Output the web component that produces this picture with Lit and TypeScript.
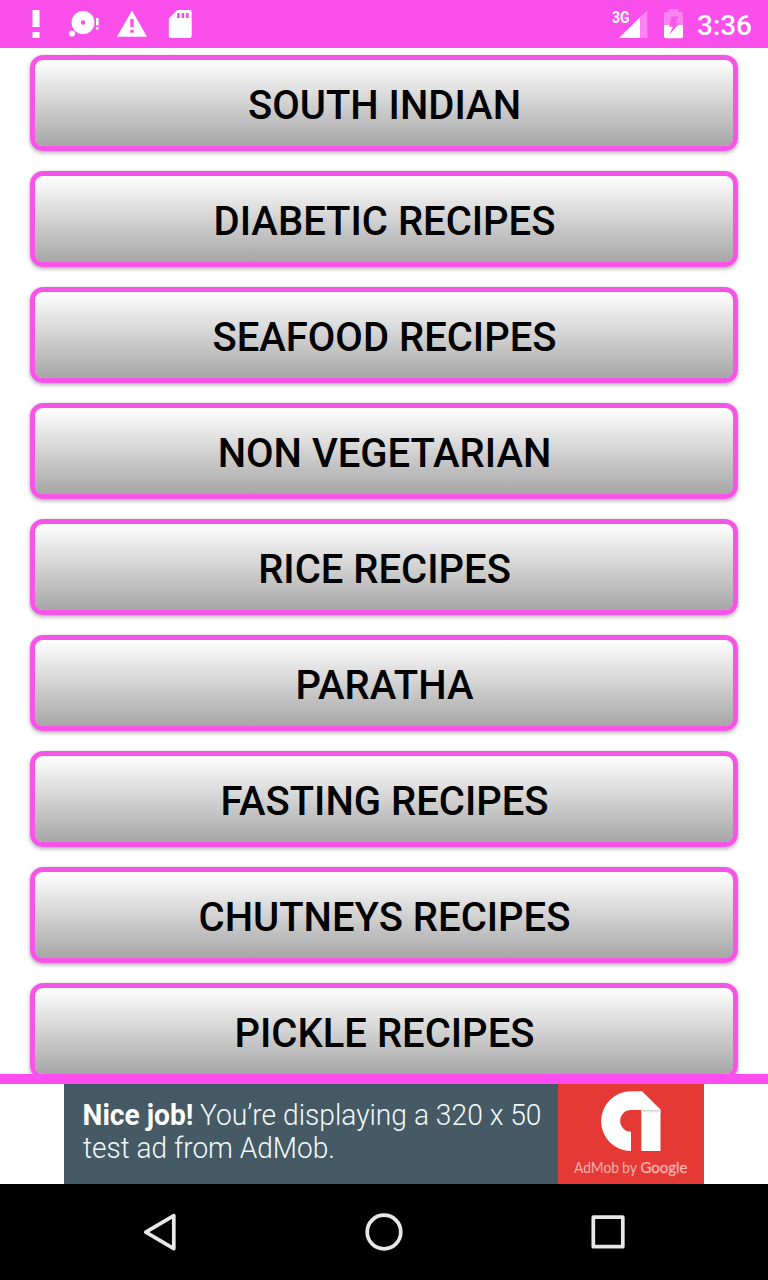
import { LitElement, html, css } from "lit";
import { customElement, property } from "lit/decorators.js";

@customElement("status-bar")
class StatusBar extends LitElement {
  static styles = css`
    :host { display: block; height: 48px; background: #fa4fea; }
    svg { display: block; }
    .t { font-family: Roboto, sans-serif; fill: #fff; }
    .net { font-size: 17px; font-weight: 700; }
    .time { font-size: 28px; font-weight: 500; }
  `;
  render() {
    return html`<svg width="768" height="48" viewBox="0 0 768 48" fill="#fff">
      <path d="M32.5 10h7v17h-7zM32.5 32h7v6h-7z" />
      <path fill-rule="evenodd" d="M83 11a11.5 11.5 0 1 1 0 23a11.5 11.5 0 1 1 0-23zM83 20.300a2.200 2.200 0 1 0 0 4.400a2.200 2.200 0 1 0 0-4.400z" />
      <circle cx="72" cy="33.5" r="3.1" />
      <path d="M96 18h2.600v7.500h-2.600zM96 27.300h2.600v2.200h-2.600z" />
      <path fill-rule="evenodd" d="M132 10.500L147 36.800H117zM130.300 19v8h3.400v-8zM130.300 29.800v3h3.400v-3z" />
      <path fill-rule="evenodd" d="M177.300 10H189.500a2.200 2.200 0 0 1 2.200 2.200V35.800a2.200 2.200 0 0 1-2.200 2.200H171a2.200 2.200 0 0 1-2.200-2.200V18.500zM177 13v5h2.700v-5zM181.500 13v5h2.700v-5zM186 13v5h2.700v-5z" />
      <text class="t net" x="612" y="23" textLength="17.500" lengthAdjust="spacingAndGlyphs">3G</text>
      <path d="M640 17.200L647.300 10V38H640z" opacity=".3" />
      <path d="M619 38L640 17.200V38z" />
      <path opacity=".3" d="M664 25V14a2 2 0 0 1 2-2h2.500V9.300h10V12H681a2 2 0 0 1 2 2V25z" />
      <path d="M664 25H683V36.200a2 2 0 0 1-2 2H666a2 2 0 0 1-2-2z" />
      <path fill="#f65ae8" d="M671.500 16.500H678.300L675.500 23.200H679.500L669.500 34.500L672.800 26.800H669.200z" />
      <text class="t time" x="697" y="35" textLength="55" lengthAdjust="spacingAndGlyphs">3:36</text>
    </svg>`;
  }
}

@customElement("recipe-button")
class RecipeButton extends LitElement {
  @property() label = "";
  static styles = css`
    :host { display: block; flex: none; }
    button {
      display: block; box-sizing: border-box; width: 100%; height: 96px;
      margin: 0; padding: 6px 0 0 1px; border: 5px solid #f754e8; border-radius: 13px;
      background: linear-gradient(#fff, #a6a6a6) padding-box;
      box-shadow: 0 2px 4px rgba(0, 0, 0, .3), 0 0 2px rgba(0, 0, 0, .12);
      font: 500 40px/80px Roboto, sans-serif; color: #000; text-align: center;
    }
  `;
  render() {
    return html`<button>${this.label}</button>`;
  }
}

@customElement("ad-banner")
class AdBanner extends LitElement {
  static styles = css`
    :host { display: flex; justify-content: center; height: 100px; background: #fff; }
    .copy { width: 494px; background: #455a64; }
    .brand { width: 146px; background: #e53935; }
    svg { display: block; }
    text { font-family: Roboto, sans-serif; fill: #f2fafc; font-size: 29px; font-weight: 300; }
    .bold { font-weight: 700; fill: #fff; }
    .brand text { font-family: Lato, sans-serif; font-size: 15.5px; font-weight: 400; fill: #f8b0ac; }
    .brand .google { stroke: #f8b0ac; stroke-width: .35px; }
  `;
  render() {
    return html`
      <div class="copy"><svg width="494" height="100">
        <text class="bold" x="18.500" y="40.500" textLength="111" lengthAdjust="spacingAndGlyphs">Nice job!</text>
        <text x="136" y="40.500" textLength="341.500" lengthAdjust="spacingAndGlyphs">You’re displaying a 320 x 50</text>
        <text x="19" y="74" textLength="252" lengthAdjust="spacingAndGlyphs">test ad from AdMob.</text>
      </svg></div>
      <div class="brand"><svg width="146" height="100">
        <defs><linearGradient id="fold" x1="0" y1="0" x2="0" y2="1">
          <stop offset="0" stop-color="#ccc" /><stop offset="1" stop-color="#fff" />
        </linearGradient></defs>
        <path fill="#fff" d="M73 67A29.900 29.900 0 0 1 73 7.200H84L102.500 25.500V67H83.300V26H73A10.800 10.800 0 0 0 73 47.700z" />
        <path fill="url(#fold)" d="M83.500 26H102.500V29H86z" />
        <text x="16" y="89" textLength="45" lengthAdjust="spacingAndGlyphs">AdMob</text>
        <text x="64" y="89" textLength="15" lengthAdjust="spacingAndGlyphs">by</text>
        <text class="google" x="82.500" y="89" textLength="47" lengthAdjust="spacingAndGlyphs">Google</text>
      </svg></div>`;
  }
}

@customElement("nav-bar")
class NavBar extends LitElement {
  static styles = css`
    :host { display: flex; justify-content: center; gap: 176px; align-items: center; height: 96px; background: #000; }
    svg { display: block; fill: none; stroke: #e8e8e8; stroke-width: 3.700; stroke-linejoin: round; }
  `;
  render() {
    return html`
      <svg width="48" height="48"><path d="M9.800 24.100L37.800 7.600V40.700z" /></svg>
      <svg width="48" height="48"><circle cx="24" cy="24" r="16.800" /></svg>
      <svg width="48" height="48"><rect x="9.300" y="9.200" width="29.500" height="29.500" /></svg>`;
  }
}

@customElement("app-root")
class AppRoot extends LitElement {
  static styles = css`
    :host { display: flex; flex-direction: column; height: 1280px; background: #fff; overflow: hidden; }
    .list {
      flex: 1; min-height: 0; box-sizing: border-box; overflow: hidden;
      display: flex; flex-direction: column; gap: 20px; padding: 7px 30px 0;
    }
    .rule { height: 10px; background: #fd4df0; }
  `;
  private items = [
    "SOUTH INDIAN", "DIABETIC RECIPES", "SEAFOOD RECIPES", "NON VEGETARIAN", "RICE RECIPES",
    "PARATHA", "FASTING RECIPES", "CHUTNEYS RECIPES", "PICKLE RECIPES",
  ];
  render() {
    return html`
      <status-bar></status-bar>
      <div class="list">${this.items.map((i) => html`<recipe-button .label=${i}></recipe-button>`)}</div>
      <div class="rule"></div>
      <ad-banner></ad-banner>
      <nav-bar></nav-bar>`;
  }
}
